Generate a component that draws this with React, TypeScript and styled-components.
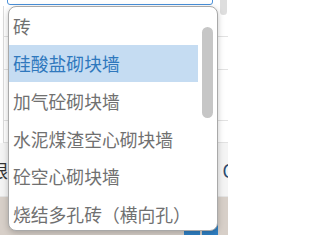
import React from "react"
import styled, { createGlobalStyle } from "styled-components"

const GlobalStyle = createGlobalStyle`
  html, body { margin: 0; padding: 0; background: #fff; }
  * { box-sizing: border-box; }
`

const FONT = `"Noto Sans CJK SC", "Noto Sans", "Liberation Sans", sans-serif`

const materials = [
  "砖",
  "硅酸盐砌块墙",
  "加气砼砌块墙",
  "水泥煤渣空心砌块墙",
  "砼空心砌块墙",
  "烧结多孔砖（横向孔）",
  "烧结多孔砖（竖向孔）",
]

// page behind the dropdown
const Screen = styled.div`
  position: relative;
  width: 228px;
  height: 235px;
  overflow: hidden;
  font-family: ${FONT};
  background: #fff;
  display: flex;
  flex-direction: column;
`

const TopStrip = styled.div`
  height: 6px;
  overflow: hidden;
  display: flex;
  align-items: flex-end;
  padding-left: 7px;
`

const Input = styled.div`
  width: 206px;
  height: 30px;
  flex-shrink: 0;
  margin-bottom: 1px;
  border: 1px solid #4a90d9;
  border-radius: 3px;
  color: #666;
  font-size: 18px;
  line-height: 24px;
  padding: 0 6px;
`

const Grid = styled.div`
  margin-left: 3px;
  border-left: 1px solid #dcdcdc;
  display: flex;
  flex-direction: column;
`

const Row = styled.div<{ $h: number }>`
  height: ${(p) => p.$h}px;
  border-bottom: 1px solid #e2e2e2;
`

const GreyRow = styled.div`
  height: 54px;
  background: #f4f4f4;
  border-bottom: 1px solid #e4e4e4;
  display: flex;
  align-items: center;
  justify-content: space-between;
  font-size: 18px;
  color: #333;
`

const CutLabel = styled.span`
  margin-left: -10px;
`

const CutValue = styled.span`
  margin-right: -6px;
  color: #2c4a6e;
`

const Footer = styled.div`
  flex: 1;
  background: #d7cfc8;
  display: flex;
  justify-content: flex-end;
  align-items: flex-end;
  gap: 2px;
  padding-right: 10px;
`

const BlueBtn = styled.div`
  width: 16px;
  height: 15px;
  background: #2f80c4;
`

const OuterThumb = styled.div`
  position: absolute;
  right: 1px;
  top: -6px;
  width: 7px;
  height: 21px;
  border-radius: 4px;
  background: #dedede;
`

// the open dropdown
const Popup = styled.div`
  position: absolute;
  left: 8px;
  top: 6px;
  width: 210px;
  height: 225px;
  background: #fff;
  border: 1px solid #a9a9a9;
  border-radius: 8px;
  box-shadow: 0 2px 6px rgba(0, 0, 0, 0.22);
  overflow: hidden;
  display: flex;
`

const List = styled.div`
  width: 189px;
  display: flex;
  flex-direction: column;
`

const Item = styled.div<{ $active?: boolean }>`
  height: 37.6px;
  flex-shrink: 0;
  display: flex;
  align-items: center;
  padding-left: 4px;
  font-size: 17.8px;
  white-space: nowrap;
  color: ${(p) => (p.$active ? "#2f78bd" : "#707070")};
  background: ${(p) => (p.$active ? "#c5dcf2" : "transparent")};
`

const Track = styled.div`
  flex: 1;
  padding: 20px 0 0 4px;
`

const Thumb = styled.div`
  width: 11px;
  height: 91px;
  border-radius: 6px;
  background: #c6c6c6;
`

export default function App() {
  return (
    <>
      <GlobalStyle />
      <Screen>
        <TopStrip>
          <Input>硅酸盐砌块墙</Input>
        </TopStrip>
        <Grid>
          <Row $h={31} />
          <Row $h={33} />
          <Row $h={51} />
          <Row $h={22} />
        </Grid>
        <GreyRow>
          <CutLabel>眼</CutLabel>
          <CutValue>C</CutValue>
        </GreyRow>
        <Footer>
          <BlueBtn />
          <BlueBtn />
        </Footer>
        <OuterThumb />
        <Popup>
          <List>
            {materials.map((m, i) => (
              <Item key={m} $active={i === 1}>
                {m}
              </Item>
            ))}
          </List>
          <Track>
            <Thumb />
          </Track>
        </Popup>
      </Screen>
    </>
  )
}
